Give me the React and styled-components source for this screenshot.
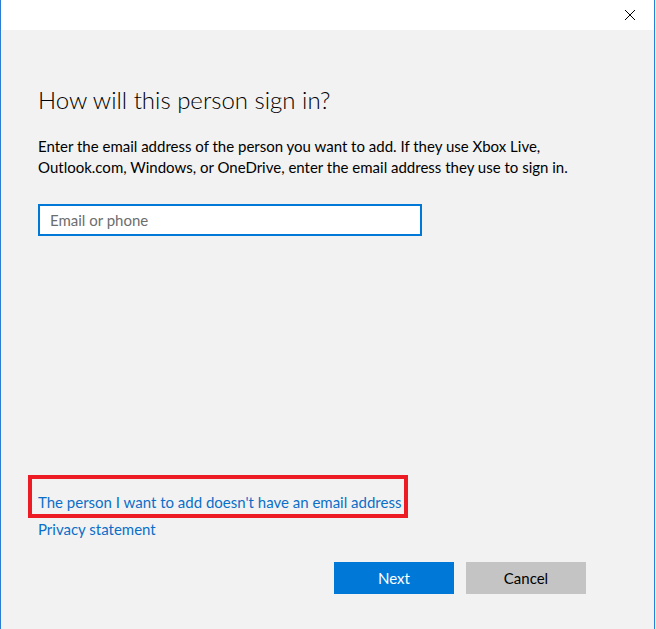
import React from 'react';
import styled, { createGlobalStyle } from 'styled-components';

const GlobalStyle = createGlobalStyle`
  html, body {
    margin: 0;
    padding: 0;
    background: #f0f0f0;
  }
  * {
    box-sizing: border-box;
  }
`;

function App() {
  return (
    <React.Fragment>
      <GlobalStyle />
      <Window>
        <TitleBar>
          <CloseButton aria-label='Close'>
            <svg width='12' height='12' viewBox='0 0 12 12'>
              <path d='M1 1 L11 11 M11 1 L1 11' stroke='#000' strokeWidth='1' fill='none' />
            </svg>
          </CloseButton>
        </TitleBar>
        <Content>
          <Heading>How will this person sign in?</Heading>
          <Description>
            Enter the email address of the person you want to add. If they use Xbox Live,
            <br />
            Outlook.com, Windows, or OneDrive, enter the email address they use to sign in.
          </Description>
          <EmailInput placeholder='Email or phone' />
          <Spacer />
          <Links>
            <Link highlighted>The person I want to add doesn't have an email address</Link>
            <Link>Privacy statement</Link>
          </Links>
          <ButtonRow>
            <Button primary>Next</Button>
            <Button>Cancel</Button>
          </ButtonRow>
        </Content>
      </Window>
    </React.Fragment>
  );
}

export default App;

const Window = styled.div`
  width: 655px;
  height: 100vh;
  display: flex;
  flex-direction: column;
  background: #f2f2f2;
  border-left: 1px solid #2b7cd3;
  border-right: 1px solid #2b7cd3;
  font-family: Lato, 'Noto Sans', sans-serif;
`;

const TitleBar = styled.div`
  height: 30px;
  flex-shrink: 0;
  background: #fff;
  display: flex;
  justify-content: flex-end;
  align-items: center;
  padding-right: 18px;
`;

const CloseButton = styled.div`
  width: 12px;
  height: 12px;
  display: flex;
  svg {
    display: block;
  }
`;

const Content = styled.div`
  flex: 1;
  display: flex;
  flex-direction: column;
  padding: 0 68px 35px 37px;
`;

const Heading = styled.h1`
  margin: 54px 0 0;
  font-size: 24px;
  line-height: 32px;
  font-weight: 300;
  color: #000;
`;

const Description = styled.p`
  margin: 20px 0 0;
  font-size: 15px;
  line-height: 21px;
  color: #000;
`;

const EmailInput = styled.input`
  margin-top: 26px;
  width: 384px;
  height: 32px;
  border: 2px solid #0078d7;
  background: #fff;
  padding: 0 10px;
  font-family: inherit;
  font-size: 15px;
  outline: none;
  &::placeholder {
    color: #6d6d6d;
  }
`;

const Spacer = styled.div`
  flex: 1;
`;

const Links = styled.div`
  display: flex;
  flex-direction: column;
  align-items: flex-start;
  gap: 5px;
`;

const Link = styled.span`
  position: relative;
  font-size: 15px;
  line-height: 22px;
  color: #0a6fc9;
  cursor: pointer;
  &::before {
    content: '';
    display: ${(p) => (p.highlighted ? 'block' : 'none')};
    position: absolute;
    top: -16px;
    bottom: -5px;
    left: -10px;
    right: -7px;
    border: 4px solid #ed1c24;
    pointer-events: none;
  }
`;

const ButtonRow = styled.div`
  display: flex;
  justify-content: flex-end;
  gap: 12px;
  margin-top: 22px;
`;

const Button = styled.button`
  width: 120px;
  height: 32px;
  border: none;
  font-family: inherit;
  font-size: 15px;
  color: ${(p) => (p.primary ? '#fff' : '#000')};
  background: ${(p) => (p.primary ? '#0078d7' : '#c4c4c4')};
`;
